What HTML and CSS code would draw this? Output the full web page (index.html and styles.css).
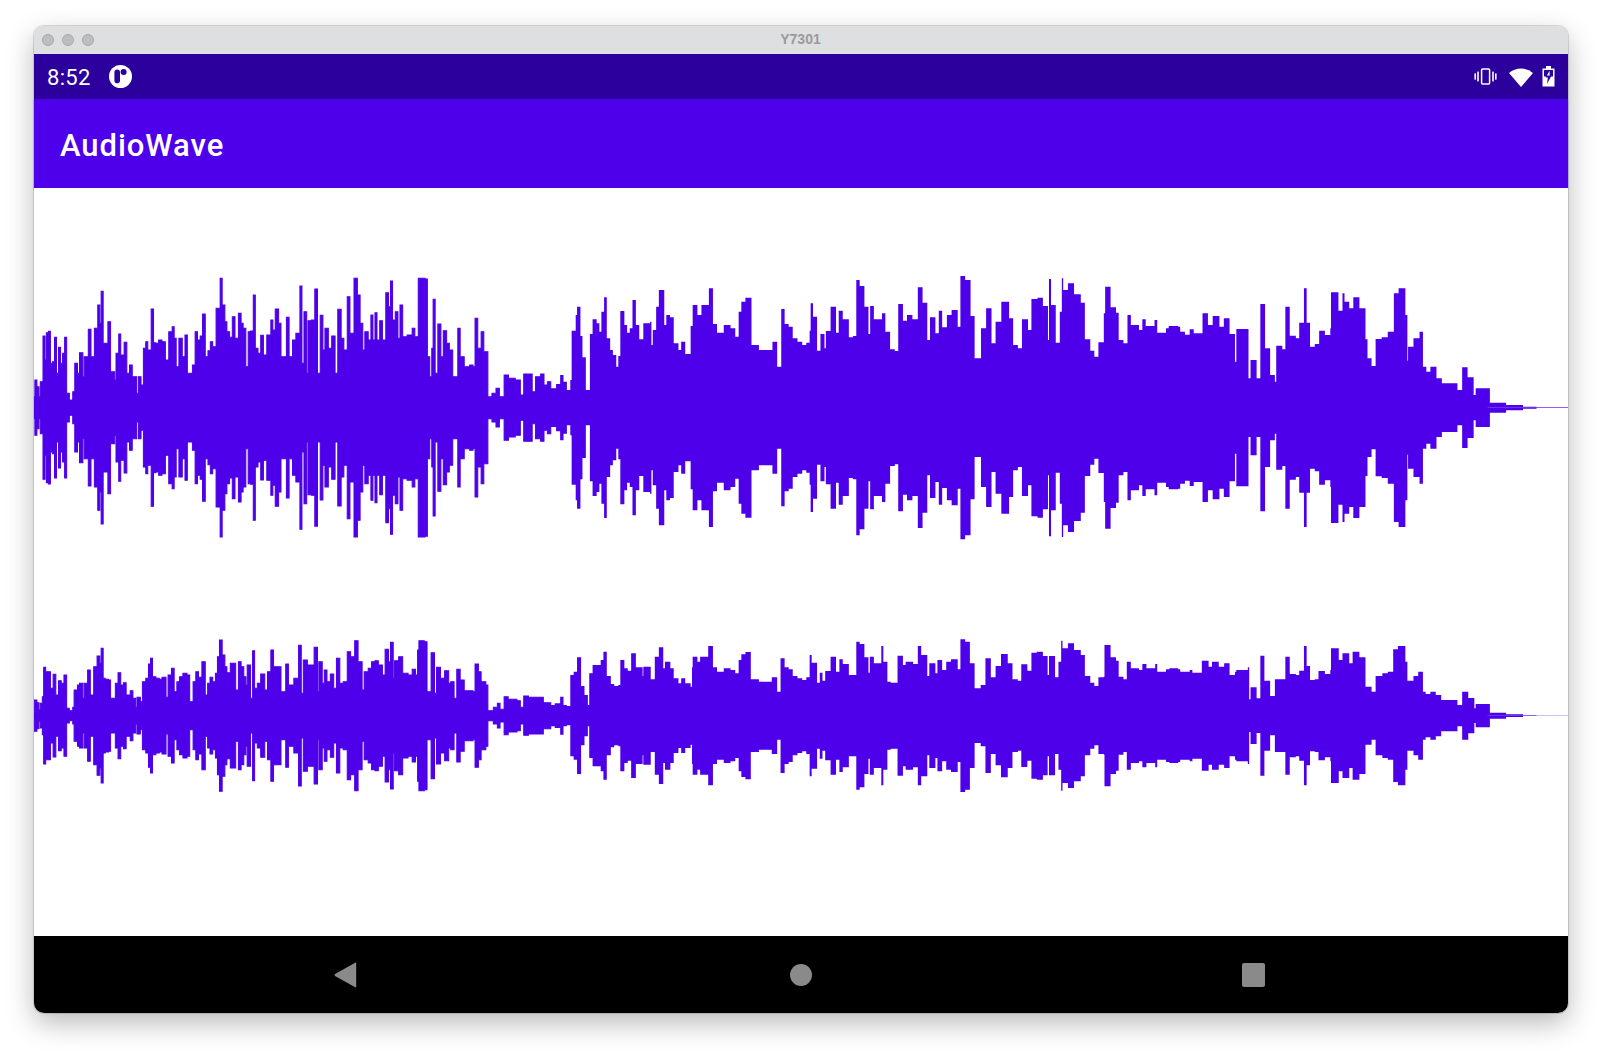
FILE: index.html
```html
<!DOCTYPE html>
<html lang="en">
<head>
  <meta charset="UTF-8">
  <meta name="viewport" content="width=device-width, initial-scale=1.0">
  <title>AudioWave</title>
  <link rel="stylesheet" href="styles.css">
</head>
<body>

  <div class="window">
    <div class="titlebar">
      <div class="lights"><span></span><span></span><span></span></div>
      <div class="device-name">Y7301</div>
    </div>

    <div class="statusbar">
      <div class="status-left">
        <span class="clock">8:52</span>
        <svg class="app-dot" width="23" height="23" viewBox="0 0 23 23">
          <circle cx="11.5" cy="11.5" r="11.5" fill="#fff"/>
          <rect x="5.4" y="4.6" width="5.6" height="13.6" rx="2.8" fill="#2b009c"/>
          <circle cx="14.6" cy="7" r="3" fill="#2b009c"/>
        </svg>
      </div>
      <div class="status-right">
        <svg class="icon-vibrate" width="23" height="17" viewBox="0 0 23 17">
          <rect x="7.6" y="1" width="8" height="15" rx="1" fill="none" stroke="#fff" stroke-width="1.5"/>
          <rect x="3.2" y="3.6" width="1.6" height="9.8" fill="#fff"/>
          <rect x="0.4" y="5.4" width="1.6" height="6.2" fill="#fff"/>
          <rect x="18.2" y="3.6" width="1.6" height="9.8" fill="#fff"/>
          <rect x="21" y="5.4" width="1.6" height="6.2" fill="#fff"/>
        </svg>
        <svg width="24" height="20" viewBox="0 0 24 20">
          <path d="M0 6 A18 18 0 0 1 24 6 L12 20 Z" fill="#fff"/>
        </svg>
        <svg width="13" height="21" viewBox="0 0 13 21">
          <path d="M4 0 H9 V2.5 H12.5 V20.5 H0.5 V2.5 H4 Z" fill="#fff"/>
          <rect x="2" y="4" width="9" height="6.5" fill="#2b009c"/>
          <path d="M7.6 4.8 L3.6 11.6 H5.9 L5 18 L9.4 9.8 H6.9 Z" fill="#2b009c"/>
          <path d="M7.6 4.8 L4.9 9.4 H6.9 L6.9 9.8 H7.6 Z" fill="#fff"/>
        </svg>
      </div>
    </div>

    <header class="appbar">
      <h1>AudioWave</h1>
    </header>

    <main class="content">
      <svg class="wave wave-large" viewBox="0 0 4602 870">
        <g id="waveLarge">
          <rect x="0" y="431" width="4360" height="24"/>
          <path class="dense" transform="translate(-42 0) scale(1.0142 1)" d="M40 443V410H44V360H50V380H56V410H60V365H68V228H74V300H78V218H84V214H90V310H96V305H102V232H108V340H114V262H120V310H126V280H132V232H138V400H146V420H156V395H162V310H170V340H176V278H186V350H190V290H202V208H210V290H220V205H230V135H236V190H240V94H246V250H260V185H268V335H280V360H284V280H292V222H298V285H308V247H316V340H324V315H332V350H345V400H350V350H358V375H365V265H372V245H378V270H388V147H395V248H402V250H410V240H420V245H430V300H440V215H450V200H456V235H462V320H470V235H480V290H488V225H495V340H510V315H518V215H525V240H533V228H540V162H548V290H556V272H563V245H570V260H580V145H592V55H598V135H606V185H612V215H620V232H628V170H636V235H646V160H654V190H660V205H668V320H675V215H682V213H690V105H696V265H704V280H712V226H720V285H730V225H742V180H748V210H755V147H765V190H772V290H788V172H796V290H806V240H816V220H828V78H834V310H840V155H848V340H852V182H862V180H872V87H880V340H888V166H896V270H902V205H912V265H922V228H932V340H940V148H950V235H958V270H968V110H976V220H988V55H998V105H1006V190H1014V270H1020V215H1030V240H1038V165H1044V240H1050V158H1056V240H1064V182H1072V240H1082V98H1090V140H1096V63H1102V180H1110V155H1118V235H1124V135H1132V230H1145V225H1160V205H1168V230H1178V55H1198V57H1205V290H1212V350H1218V265H1222V118H1228V340H1236V192H1245V290H1252V212H1262V250H1270V270H1280V350H1295V205H1302V290H1314V320H1330V315H1340V320H1346V175H1354V265H1364V215H1372V275H1384V410H1396V400H1408V385H1418V410H1432V345H1445V355H1465V360H1480V405H1490V342H1505V342H1515V395H1525V350H1540V342H1550V375H1560V365H1570V443Z"/>
          <path transform="translate(1548 0) scale(1.0142 1)" d="M0 443V385H18V372H30V345H40V365H50V390H60V360H64V212H76V165H80V140H90V228H96V292H106V390H118V222H126V178H138V190H146V215H152V155H160V112H168V235H178V270H186V285H196V320H202V288H208V153H220V195H228V218H236V205H244V120H254V195H264V238H276V190H296V185H300V255H304V210H314V140H322V90H338V195H344V165H355V172H366V250H380V270H388V245H400V282H416V198H422V135H436V165H448V135H470V85H482V192H494V218H514V195H534V205H548V230H558V155H566V125H578V113H596V255H618V270H658V245H672V320H684V147H694V192H706V200H718V235H732V245H746V255H758V248H768V212H771V130H778V170H790V272H800V222H812V265H816V213H830V140H846V218H854V152H866V178H884V232H896V228H906V60H916V78H930V140H942V222H947V138H958V178H982V160H992V215H1006V268H1020V273H1030V132H1044V182H1056V165H1072V178H1088V82H1102V128H1116V240H1124V172H1140V220H1150V152H1160V202H1174V165H1188V150H1206V200H1214V48H1228V60H1244V168H1256V295H1275V205H1290V145H1306V250H1318V185H1335V125H1358V175H1370V255H1384V265H1396V178H1414V210H1424V117H1442V113H1458V138H1473V240H1476V57H1482V135H1496V248H1508V155H1514V55H1518V90H1532V70H1550V103H1570V443Z"/>
          <path transform="translate(3108 0) scale(1.0142 1)" d="M0 443V75H12V105H30V128H44V238H60V272H72V290H84V247H100V160H104V80H120V142H136V158H144V240H158V250H170V165H180V195H204V210H214V178H224V198H250V180H258V218H284V205H292V198H320V200H326V215H340V224H354V208H366V220H392V160H408V195H422V168H442V200H455V175H472V222H488V305H492V207H528V355H534V300H552V355H563V132H577V265H592V345H606V365H610V257H628V268H637V140H650V227H668V235H678V188H692V85H700V188H710V260H724V252H737V212H754V225H770V205H772V97H794V152H806V100H812V125H826V145H838V112H856V145H874V238H880V295H892V318H904V237H922V232H940V215H958V100H972V85H992V165H998V302H1000V260H1016V235H1034V215H1044V320H1054V335H1066V320H1084V355H1100V370H1146V390H1160V322H1176V352H1194V405H1200V385H1242V428H1290V435H1340V440H1380V442H1473V443Z"/>
        </g>
        <use href="#waveLarge" transform="translate(0 886) scale(1 -1)"/>
      </svg>

      <svg class="wave wave-small" viewBox="0 0 4602 570">
        <g id="waveSmall">
          <rect x="0" y="278" width="4360" height="18"/>
          <path class="dense" transform="translate(-42 0) scale(1.0142 1)" d="M40 287V290H42V240H50V248H56V270H60V250H66V230H70V142H76V155H84V155H90V205H98V163H106V225H114V182H122V190H130V165H138V265H146V272H156V262H160V210H170V195H176V190H186V235H190V190H200V150H208V225H218V140H228V108H236V130H240V85H246V175H252V178H262V180H268V235H282V190H290V158H298V195H306V188H314V225H326V212H334V235H342V262H346V232H356V245H362V185H372V175H380V132H386V115H392V170H402V175H412V178H420V172H432V232H438V165H448V145H456V215H464V185H472V170H482V160H494V165H502V245H512V185H520V155H528V172H538V125H548V225H555V190H562V172H570V185H578V160H584V110H590V60H598V105H606V140H612V158H622V130H638V210H646V125H654V140H662V170H668V195H672V135H682V235H688V92H694V205H702V190H712V162H724V210H732V155H742V90H750V140H772V215H786V132H794V195H810V175H824V76H832V220H838V120H850V135H870V82H880V215H884V125H894V190H900V150H908V185H918V162H928V205H936V115H946V190H956V185H968V95H978V110H990V62H1000V125H1012V210H1018V155H1030V145H1040V125H1050V122H1060V135H1072V165H1080V88H1090V125H1096V67H1104V175H1108V122H1118V170H1120V110H1132V160H1148V165H1160V148H1170V165H1176V90H1180V62H1196V65H1204V215H1216V98H1226V220H1232V142H1244V175H1256V152H1268V190H1274V185H1284V235H1292V148H1302V180H1314V212H1340V215H1346V132H1356V155H1364V185H1378V195H1384V272H1400V262H1412V250H1420V268H1432V230H1444V238H1470V242H1480V262H1490V228H1504V232H1530V232H1548V248H1570V287Z"/>
          <path transform="translate(1548 0) scale(1.0142 1)" d="M0 287V255H14V250H30V230H40V255H50V258H60V165H70V155H80V112H92V198H102V225H112V255H116V160H126V135H140V135H150V120H158V95H168V168H180V192H190V198H202V195H208V120H220V145H230V152H240V100H254V142H274V168H276V140H298V178H310V110H322V82H335V145H340V125H356V145H366V175H380V190H388V175H400V190H416V200H420V142H422V110H436V125H444V110H468V78H482V142H494V155H514V145H534V150H548V160H558V120H566V103H578V96H594V178H618V185H656V172H672V215H682V115H694V142H706V148H718V168H732V175H746V180H758V172H768V105H774V128H790V188H798V158H806V182H814V153H830V110H846V155H856V118H866V132H884V165H906V65H916V72H930V112H942V158H946V110H958V130H980V78H986V125H998V185H1008V188H1028V107H1044V135H1052V125H1074V132H1088V78H1098V105H1116V168H1122V130H1140V160H1146V120H1160V150H1172V125H1186V118H1206V148H1214V58H1228V65H1242V130H1256V205H1274V195H1288V115H1304V172H1318V138H1334V102H1354V130H1368V178H1384V182H1394V133H1412V152H1424V98H1440V95H1458V108H1472V165H1476V108H1494V172H1504V125H1512V62H1516V85H1532V70H1550V90H1570V287Z"/>
          <path transform="translate(3108 0) scale(1.0142 1)" d="M0 287V73H12V92H30V105H44V168H60V188H72V198H84V172H100V170H102V75H120V112H136V122H144V170H158V178H168V125H180V145H204V150H214V132H226V145H252V132H258V155H284V148H294V145H320V148H326V155H354V150H362V158H390V122H410V140H420V125H440V140H456V130H472V165H488V155H492V150H526V142H530V238H534V202H552V235H563V107H575V182H592V228H606V178H626V178H637V110H650V162H668V165H678V152H692V78H700V138H710V180H724V178H735V153H754V162H770V150H772V85H795V120H806V100H826V130H836V95H856V112H874V200H892V215H904V168H924V160H940V155H956V88H970V78H992V125H998V182H1016V168H1030V155H1044V215H1052V222H1066V215H1082V225H1098V240H1146V255H1160V215H1178V234H1196V265H1200V252H1242V278H1290V283H1340V286H1380V286.4H1473V287Z"/>
        </g>
        <use href="#waveSmall" transform="translate(0 574) scale(1 -1)"/>
      </svg>
    </main>

    <nav class="navbar">
      <svg class="nav-back" width="24" height="26" viewBox="0 0 24 26">
        <path d="M22.2 1.2 V24.8 Q22.2 25.8 21.2 25.3 L1 14 Q0 13 1 12 L21.2 0.7 Q22.2 0.2 22.2 1.2 Z" fill="#8a8a8a"/>
      </svg>
      <span class="nav-home"></span>
      <span class="nav-recent"></span>
    </nav>
  </div>

</body>
</html>
```

FILE: styles.css
```css
html, body {
  margin: 0;
  padding: 0;
  height: 100%;
  background: #fff;
  overflow: hidden;
}
.window {
  width: 1534px;
  margin: 26px 0 0 34px;
  border-radius: 10px;
  display: flex;
  flex-direction: column;
  box-shadow: 0 0 0 1px rgba(0, 0, 0, 0.13), 0 10px 28px rgba(0, 0, 0, 0.28);
}
.titlebar {
  height: 28px;
  background: #dedfe1;
  border-radius: 10px 10px 0 0;
  display: flex;
  align-items: center;
}
.lights {
  display: flex;
  gap: 8px;
  margin-left: 8px;
}
.lights span {
  width: 10px;
  height: 10px;
  border: 1px solid #a9a9a9;
  border-radius: 50%;
  background: #bdbdbe;
}
.device-name {
  flex: 1;
  margin: 0 61px 2px 0;
  text-align: center;
  font-family: "Liberation Sans", Arial, sans-serif;
  font-size: 14px;
  font-weight: bold;
  color: #9a9a9c;
}
.statusbar {
  height: 45px;
  background: #2b009c;
  display: flex;
  justify-content: space-between;
  align-items: center;
  color: #fff;
}
.status-left {
  display: flex;
  align-items: center;
  gap: 18px;
  margin-left: 13px;
}
.clock {
  margin-top: 1px;
  font-family: Roboto, sans-serif;
  font-size: 22px;
  letter-spacing: 0.3px;
}
.app-dot {
  display: block;
}
.status-right {
  display: flex;
  align-items: center;
  gap: 9px;
  margin-right: 13px;
}
.status-right svg {
  display: block;
}
.icon-vibrate {
  margin-right: 3px;
}
.appbar {
  height: 89px;
  background: #4d00e9;
  display: flex;
  align-items: center;
  box-shadow: 0 1px 2px rgba(77, 0, 233, 0.3);
}
.appbar h1 {
  margin: 4px 0 0 26px;
  font-family: Roboto, sans-serif;
  font-size: 31px;
  font-weight: 500;
  letter-spacing: 0.95px;
  color: #fff;
}
.content {
  height: 676px;
  padding-top: 72px;
  background: #fff;
  display: flex;
  flex-direction: column;
  gap: 70px;
}
.wave {
  display: block;
  width: 1534px;
  fill: #4d00e9;
}
.wave .dense {
  stroke: #4d00e9;
  stroke-width: 3;
}
.wave-large {
  height: 290px;
}
.wave-small {
  height: 190px;
}
.navbar {
  height: 77px;
  background: #000;
  border-radius: 0 0 10px 10px;
  display: flex;
  justify-content: center;
  align-items: center;
  gap: 430px;
  padding-right: 3px;
}
.navbar svg {
  display: block;
}
.nav-back {
  margin-right: 2px;
}
.nav-home {
  width: 22px;
  height: 22px;
  border-radius: 50%;
  background: #8a8a8a;
}
.nav-recent {
  width: 23px;
  height: 24px;
  border-radius: 2px;
  background: #8a8a8a;
}
```
